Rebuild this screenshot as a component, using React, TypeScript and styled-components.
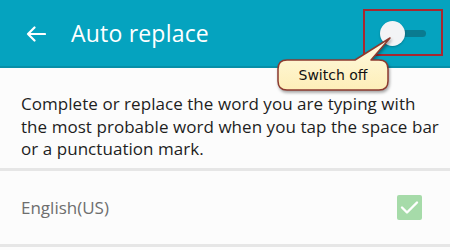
import React from "react";
import styled, { createGlobalStyle } from "styled-components";

const Global = createGlobalStyle`
  html, body { margin: 0; padding: 0; background: #fcfcfc; }
  body { font-family: "Open Sans", "Noto Sans", sans-serif; }
  #root { width: 450px; height: 250px; overflow: hidden; }
`;

const Screen = styled.div`
  position: relative;
  width: 450px;
  height: 250px;
  background: #fcfcfc;
  display: flex;
  flex-direction: column;
`;

const Header = styled.header`
  height: 66px;
  background: #05a3bf;
  border-bottom: 2px solid #078fa8;
  display: flex;
  align-items: center;
  padding: 0 24px 0 26px;
  box-sizing: content-box;
  flex-shrink: 0;
`;

const BackButton = styled.div`
  width: 20px;
  height: 16px;
  display: flex;
  align-items: center;
  margin-top: 1px;
`;

const Title = styled.h1`
  margin: 0 0 0 25px;
  font-family: "Open Sans", "Noto Sans", sans-serif;
  font-weight: 400;
  font-size: 23px;
  color: #ffffff;
  letter-spacing: 0.2px;
`;

const SwitchBox = styled.div`
  margin-left: auto;
  position: relative;
  width: 46px;
  height: 25px;
  margin-top: 1px;
`;

const Track = styled.div`
  position: absolute;
  left: 8px;
  right: 0;
  top: 9px;
  height: 7px;
  border-radius: 4px;
  background: #0a7b90;
`;

const Thumb = styled.div`
  position: absolute;
  left: 0;
  top: 0;
  width: 25px;
  height: 25px;
  border-radius: 50%;
  background: #f3f4f6;
  box-shadow: 0 1px 2px rgba(0, 0, 0, 0.25);
`;

const Description = styled.p`
  margin: 0;
  padding: 25px 10px 7px 21px;
  font-size: 17px;
  line-height: 22.5px;
  letter-spacing: 0.05px;
  color: #1e1e1e;
`;

const Divider = styled.div`
  height: 3px;
  background: #e6e6e6;
  flex-shrink: 0;
`;

const Row = styled.div`
  height: 73px;
  display: flex;
  align-items: center;
  justify-content: space-between;
  padding: 0 28px 0 21px;
  flex-shrink: 0;
`;

const RowLabel = styled.span`
  font-size: 17px;
  color: #6e6e6e;
`;

const CheckBox = styled.div`
  width: 25px;
  height: 25px;
  border-radius: 2px;
  background: #a6dba9;
  display: flex;
  align-items: center;
  justify-content: center;
`;

const RedFrame = styled.div`
  position: absolute;
  left: 363px;
  top: 9px;
  width: 80px;
  height: 47px;
  border: 2px solid #a8272f;
  box-sizing: border-box;
`;

const Callout = styled.div`
  position: absolute;
  left: 274px;
  top: 34px;
  width: 120px;
  height: 60px;
`;

const CalloutShape = styled.svg`
  position: absolute;
  inset: 0;
  overflow: visible;
`;

const CalloutText = styled.div`
  position: relative;
  margin: 26px 0 0 4px;
  width: 110px;
  height: 30px;
  display: flex;
  align-items: center;
  justify-content: center;
  font-family: "DejaVu Sans", Verdana, sans-serif;
  font-size: 14px;
  color: #111;
`;

export default function App() {
  return (
    <>
      <Global />
      <Screen>
        <Header>
          <BackButton>
            <svg width="20" height="16" viewBox="0 0 20 16">
              <path
                d="M19 8H2M8.5 1.5L2 8l6.5 6.5"
                fill="none"
                stroke="#fff"
                strokeWidth="2.2"
                strokeLinecap="round"
                strokeLinejoin="round"
              />
            </svg>
          </BackButton>
          <Title>Auto replace</Title>
          <SwitchBox>
            <Track />
            <Thumb />
          </SwitchBox>
        </Header>
        <Description>
          Complete or replace the word you are typing with the most probable
          word when you tap the space bar or a punctuation mark.
        </Description>
        <Divider />
        <Row>
          <RowLabel>English(US)</RowLabel>
          <CheckBox>
            <svg width="19" height="15" viewBox="0 0 19 15">
              <path
                d="M2 7.5l5 5L17 2.5"
                fill="none"
                stroke="#fff"
                strokeWidth="2.4"
                strokeLinecap="round"
                strokeLinejoin="round"
              />
            </svg>
          </CheckBox>
        </Row>
        <Divider />
        <RedFrame />
        <Callout>
          <CalloutShape width="120" height="60" viewBox="0 0 120 60">
            <defs>
              <linearGradient id="cg" x1="0" y1="0" x2="0" y2="1">
                <stop offset="0" stopColor="#fffbe3" />
                <stop offset="1" stopColor="#fdeeb8" />
              </linearGradient>
            </defs>
            <path
              d="M13 26H81L116 4L97 26H105Q114 26 114 35V47Q114 56 105 56H13Q4 56 4 47V35Q4 26 13 26Z"
              fill="url(#cg)"
              stroke="#8c3a2f"
              strokeWidth="1.5"
              strokeLinejoin="round"
              style={{ filter: "drop-shadow(1px 2px 1.5px rgba(0,0,0,0.35))" }}
            />
          </CalloutShape>
          <CalloutText>Switch off</CalloutText>
        </Callout>
      </Screen>
    </>
  );
}
